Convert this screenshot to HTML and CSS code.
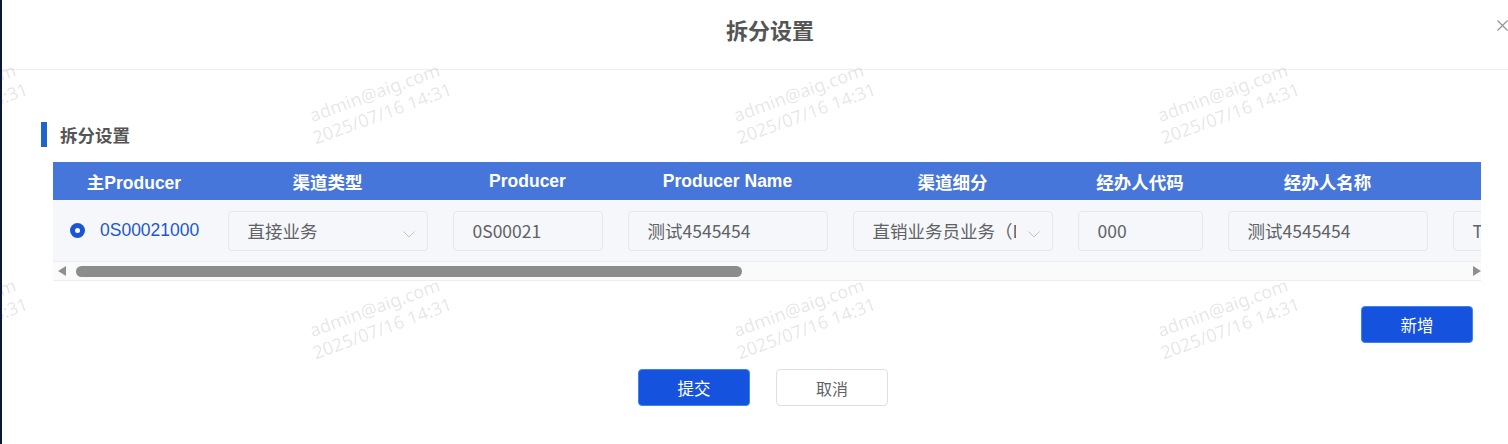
FILE: index.html
```html
<!DOCTYPE html>
<html lang="zh-CN">
<head>
<meta charset="utf-8">
<title>拆分设置</title>
<link rel="stylesheet" href="styles.css">
</head>
<body>
<div class="page">
  <div class="side-strip"></div>
  <div class="modal">
    <div class="modal-header">
      <span></span>
      <h2 class="modal-title">拆分设置</h2>
      <span class="close" aria-label="关闭">
        <svg width="11" height="11" viewBox="0 0 11 11"><path d="M0.5 0.5L10.5 10.5M10.5 0.5L0.5 10.5" stroke="#909399" stroke-width="1.2" fill="none"/></svg>
      </span>
    </div>

    <div class="modal-body">
      <div class="section-title"><span class="bar"></span><span>拆分设置</span></div>

      <div class="table-wrap">
        <div class="table">
          <div class="thead">
            <div class="cell c1">主Producer</div>
            <div class="cell c2">渠道类型</div>
            <div class="cell c3">Producer</div>
            <div class="cell c4">Producer Name</div>
            <div class="cell c5">渠道细分</div>
            <div class="cell c6">经办人代码</div>
            <div class="cell c7">经办人名称</div>
            <div class="cell c8"></div>
          </div>
          <div class="trow">
            <div class="cell c1 first">
              <span class="radio"><span class="radio-dot"></span></span>
              <span class="code">0S00021000</span>
            </div>
            <div class="cell c2"><div class="input w200 select"><span class="val">直接业务</span><span class="arrow"><svg width="12" height="7" viewBox="0 0 12 7"><path d="M0.5 0.5L6 6L11.5 0.5" stroke="#c0c4cc" stroke-width="1" fill="none"/></svg></span></div></div>
            <div class="cell c3"><div class="input w150"><span class="val">0S00021</span></div></div>
            <div class="cell c4"><div class="input w200"><span class="val">测试4545454</span></div></div>
            <div class="cell c5"><div class="input w200 select"><span class="val">直销业务员业务（DSR）</span><span class="arrow"><svg width="12" height="7" viewBox="0 0 12 7"><path d="M0.5 0.5L6 6L11.5 0.5" stroke="#c0c4cc" stroke-width="1" fill="none"/></svg></span></div></div>
            <div class="cell c6"><div class="input w125"><span class="val">000</span></div></div>
            <div class="cell c7"><div class="input w200"><span class="val">测试4545454</span></div></div>
            <div class="cell c8"><div class="input w200"><span class="val">TE</span></div></div>
          </div>
        </div>
        <div class="hscroll">
          <span class="arr arr-left"></span>
          <span class="track"><span class="thumb"></span></span>
          <span class="arr arr-right"></span>
        </div>
      </div>

      <div class="add-row"><button class="btn btn-primary">新增</button></div>
    </div>

    <div class="modal-footer">
      <button class="btn btn-primary">提交</button>
      <button class="btn btn-default">取消</button>
    </div>

    <div class="watermarks">
      <div class="tile"><span class="wm">admin@aig.com<br>2025/07/16 14:31</span></div>
      <div class="tile"><span class="wm">admin@aig.com<br>2025/07/16 14:31</span></div>
      <div class="tile"><span class="wm">admin@aig.com<br>2025/07/16 14:31</span></div>
      <div class="tile"><span class="wm">admin@aig.com<br>2025/07/16 14:31</span></div>
      <div class="tile"><span class="wm">admin@aig.com<br>2025/07/16 14:31</span></div>
      <div class="tile"><span class="wm">admin@aig.com<br>2025/07/16 14:31</span></div>
      <div class="tile"><span class="wm">admin@aig.com<br>2025/07/16 14:31</span></div>
      <div class="tile"><span class="wm">admin@aig.com<br>2025/07/16 14:31</span></div>
    </div>
  </div>
</div>
</body>
</html>
```

FILE: styles.css
```css
* { box-sizing: border-box; }

html, body {
  margin: 0;
  padding: 0;
  background: #ffffff;
}

body {
  font-family: "Noto Sans CJK SC", "Noto Sans", sans-serif;
  width: 1508px;
  height: 444px;
  overflow: hidden;
}

.page {
  display: flex;
  width: 1508px;
  height: 444px;
  overflow: hidden;
}

.side-strip {
  width: 2px;
  flex-shrink: 0;
  background: #0b1736;
}

.modal {
  position: relative;
  width: 1536px;
  flex-shrink: 0;
  background: #ffffff;
  overflow: hidden;
}

/* header */
.modal-header {
  display: grid;
  grid-template-columns: 1fr auto 1fr;
  align-items: center;
  height: 70px;
  border-bottom: 1px solid #ebeef5;
  padding-bottom: 12px;
}

.modal-title {
  margin: 0;
  font-size: 22px;
  font-weight: 700;
  color: #555555;
  line-height: 30px;
}

.close {
  justify-self: end;
  margin-right: 30px;
  margin-bottom: 6px;
  display: flex;
  align-items: center;
}

/* body */
.modal-body {
  padding: 52px 0 0 39px;
}

.section-title {
  display: flex;
  align-items: center;
  gap: 13px;
  height: 25px;
  font-size: 17.5px;
  font-weight: 700;
  color: #555555;
}

.section-title .bar {
  width: 6px;
  height: 25px;
  background: #1f64c8;
}

.table-wrap {
  margin: 15px 0 0 12px;
  width: 1428px;
  overflow: hidden;
  position: relative;
}

.table {
  display: flex;
  flex-direction: column;
  width: 1428px;
  overflow: hidden;
}

.thead, .trow {
  display: flex;
  width: 1700px;
}

.thead {
  height: 38px;
  background: #4676d9;
  color: #ffffff;
  font-family: "Liberation Sans", "Noto Sans CJK SC", sans-serif;
  font-weight: 700;
  font-size: 17.5px;
}

.thead .cell {
  justify-content: center;
}

.trow {
  height: 61px;
  background: #f5f7fa;
}

.cell {
  display: flex;
  align-items: center;
  justify-content: center;
  flex-shrink: 0;
}

.c1 { width: 162px; }
.c2 { width: 225px; }
.c3 { width: 175px; }
.c4 { width: 225px; }
.c5 { width: 225px; }
.c6 { width: 150px; }
.c7 { width: 225px; }
.c8 { width: 225px; }

.trow .cell.first {
  justify-content: flex-start;
  padding-left: 17px;
  gap: 15px;
}

.radio {
  width: 15px;
  height: 15px;
  border-radius: 50%;
  background: #1a55d8;
  display: flex;
  align-items: center;
  justify-content: center;
}

.radio-dot {
  width: 5px;
  height: 5px;
  border-radius: 50%;
  background: #ffffff;
}

.code {
  font-family: "Liberation Sans", sans-serif;
  font-size: 17.5px;
  color: #1f57cc;
}

.input {
  height: 40px;
  border: 1px solid #e4e7ed;
  border-radius: 4px;
  background: #f5f7fa;
  display: flex;
  align-items: center;
  padding: 0 12px 0 19px;
  font-size: 17.5px;
  color: #606266;
  overflow: hidden;
}

.input .val {
  white-space: nowrap;
  overflow: hidden;
  flex: 1;
  min-width: 0;
}

.input.select .val {
  margin-right: 12px;
}

.input .arrow {
  display: flex;
  margin-top: 8px;
  flex-shrink: 0;
}

.w200 { width: 200px; }
.w150 { width: 150px; }
.w125 { width: 125px; }

/* horizontal scrollbar */
.hscroll {
  display: flex;
  align-items: center;
  height: 20px;
  border-top: 1px solid #ebeef5;
  border-bottom: 1px solid #ebeef5;
  background: #fafafa;
  padding: 0 0 0 5px;
}

.arr {
  width: 0;
  height: 0;
  border-top: 5px solid transparent;
  border-bottom: 5px solid transparent;
  flex-shrink: 0;
}

.arr-left {
  border-right: 8px solid #8f8f8f;
}

.arr-right {
  border-left: 8px solid #8f8f8f;
}

.track {
  flex: 1;
  display: flex;
  align-items: center;
  padding: 0 0 0 10px;
}

.thumb {
  width: 666px;
  height: 11px;
  border-radius: 6px;
  background: #8c8c8c;
}

.add-row {
  display: flex;
  justify-content: flex-end;
  width: 1432px;
  margin-top: 25px;
}

/* buttons */
.btn {
  width: 112px;
  height: 37px;
  border-radius: 4px;
  font-family: "Noto Sans CJK SC", sans-serif;
  font-size: 16.5px;
  cursor: pointer;
  display: flex;
  align-items: center;
  justify-content: center;
  padding: 0;
}

.btn-primary {
  background: #1552de;
  border: 1px solid #3a86ea;
  color: #ffffff;
}

.btn-default {
  background: #ffffff;
  border: 1px solid #dcdfe6;
  color: #606266;
  font-size: 16px;
}

.modal-footer {
  display: flex;
  justify-content: center;
  gap: 26px;
  margin-top: 26px;
  padding-right: 14px;
}

/* watermark overlay */
.watermarks {
  position: absolute;
  left: -124px;
  top: 107px;
  display: grid;
  grid-template-columns: repeat(4, 424px);
  grid-auto-rows: 215px;
  pointer-events: none;
  z-index: 5;
}

.tile {
  position: relative;
}

.wm {
  display: inline-block;
  font-family: "Noto Sans", sans-serif;
  font-size: 18px;
  line-height: 22px;
  color: rgba(0, 0, 0, 0.11);
  text-align: center;
  white-space: nowrap;
  transform: rotate(-20deg);
  transform-origin: 0 0;
}
```
